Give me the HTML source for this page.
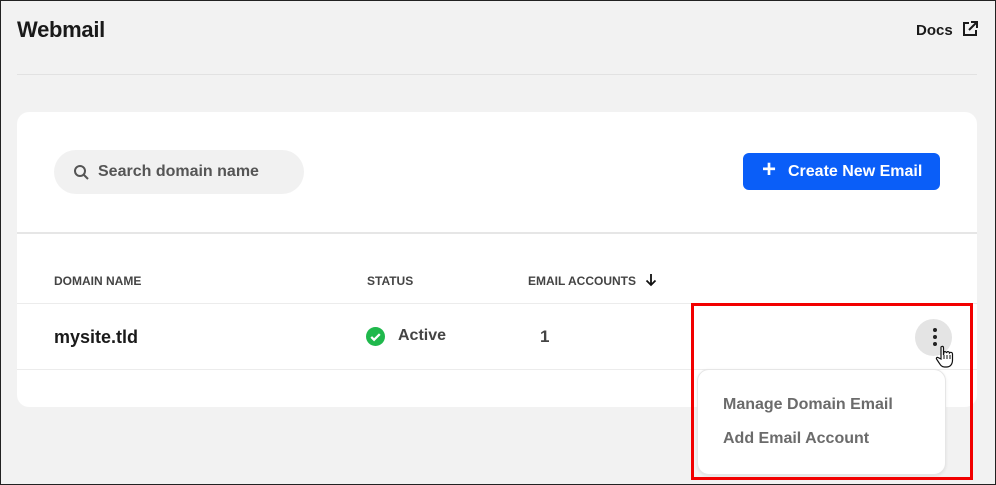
<!DOCTYPE html>
<html><head><meta charset="utf-8"><style>
*{box-sizing:border-box;margin:0;padding:0}
body{width:996px;height:485px;overflow:hidden;background:#f2f2f2;font-family:"Liberation Sans",Arial,sans-serif;position:relative;border:1px solid #222;}
.abs{position:absolute}
.title{left:16px;top:16px;font-size:22px;font-weight:bold;color:#1a1a1a;letter-spacing:-0.3px}
.docs{left:915px;top:21px;font-size:15px;font-weight:bold;color:#1a1a1a}
.hr{left:16px;top:73px;width:960px;height:1px;background:#e2e2e2}
.card{left:16px;top:111px;width:960px;height:295px;background:#fff;border-radius:12px}
.search{left:53px;top:149px;width:250px;height:44px;border-radius:22px;background:#f1f1f1;font-size:16px;font-weight:bold;color:#555}
.btn{left:742px;top:152px;width:197px;height:37px;border-radius:6px;background:#0a5ef8;color:#fff;font-size:16px;font-weight:bold}
.line{left:16px;width:960px;height:1px;background:#ececec}
.th{top:273px;font-size:12px;font-weight:bold;color:#444}
.dot{width:4px;height:4px;border-radius:2px;background:#222;left:18px}
</style></head><body>
<div class="abs title">Webmail</div>
<div class="abs docs">Docs</div>
<svg class="abs" style="left:961px;top:20px" width="16" height="16" viewBox="0 0 16 16" fill="none" stroke="#1a1a1a" stroke-width="2"><path d="M7 2H2v12h12V9"/><path d="M9 1h6v6M15 1L7 9"/></svg>
<div class="abs hr"></div>
<div class="abs card"></div>
<div class="abs search"><svg class="abs" style="left:19px;top:14px" width="16" height="16" viewBox="0 0 16 16" fill="none" stroke="#555" stroke-width="2"><circle cx="7" cy="7" r="5"/><path d="M11 11l4 4"/></svg><span class="abs" style="left:44px;top:13px">Search domain name</span></div>
<div class="abs btn"><span class="abs" style="left:19px;top:5px;font-size:24px;font-weight:bold;line-height:24px">+</span><span class="abs" style="left:45px;top:10px">Create New Email</span></div>
<div class="abs line" style="top:231px;height:2px;background:#e6e6e6"></div>
<div class="abs th" style="left:53px">DOMAIN NAME</div>
<div class="abs th" style="left:366px">STATUS</div>
<div class="abs th" style="left:527px">EMAIL ACCOUNTS</div>
<svg class="abs" style="left:644px;top:272px" width="12" height="14" viewBox="0 0 12 14" fill="none" stroke="#111" stroke-width="1.8"><path d="M6 1v11M1.5 7.5L6 12l4.5-4.5"/></svg>
<div class="abs line" style="top:302px"></div>
<div class="abs" style="left:53px;top:326px;font-size:18px;font-weight:bold;color:#1a1a1a">mysite.tld</div>
<svg class="abs" style="left:365px;top:326px" width="19" height="19" viewBox="0 0 20 20"><circle cx="10" cy="10" r="10" fill="#1fb84c"/><path d="M5.5 10.5l3 3 6-6" fill="none" stroke="#fff" stroke-width="2.4"/></svg>
<div class="abs" style="left:397px;top:326px;font-size:16px;font-weight:bold;color:#444">Active</div>
<div class="abs" style="left:539px;top:326px;font-size:17px;font-weight:bold;color:#444">1</div>
<div class="abs line" style="top:368px"></div>
<div class="abs" style="left:914px;top:318px;width:37px;height:37px;border-radius:50%;background:#e4e4e4">
<div class="abs dot" style="top:9px"></div><div class="abs dot" style="top:16px"></div><div class="abs dot" style="top:23px"></div></div>
<svg class="abs" style="left:934px;top:344px" width="20" height="24" viewBox="0 0 20 24"><path d="M6 2c1-1 2.5-1 2.5 1v7l.5-3c1-1 2.5 0 2.5 1l.5-1c1-1 2.5 0 2.5 1l.5-.5c1-.5 2.5 0 2.5 1.5v6c0 4-2 7-6 7h-2c-3 0-4-2-6-5l-2-3c-.5-1 .5-2 1.5-1.5L6 14V2z" fill="#fff" stroke="#111" stroke-width="1.2"/><path d="M9 10v4M12 10v4M15 10v4" stroke="#111" stroke-width="1"/></svg>
<div class="abs" style="left:696px;top:368px;width:249px;height:106px;background:#fff;border:1px solid #e6e6e6;border-radius:12px;box-shadow:0 1px 3px rgba(0,0,0,.08)">
<div class="abs" style="left:25px;top:26px;font-size:16px;font-weight:bold;color:#6b6b6b">Manage Domain Email</div>
<div class="abs" style="left:25px;top:60px;font-size:16px;font-weight:bold;color:#6b6b6b">Add Email Account</div>
</div>
<div class="abs" style="left:690px;top:302px;width:282px;height:177px;border:3px solid #f20000"></div>
</body></html>
